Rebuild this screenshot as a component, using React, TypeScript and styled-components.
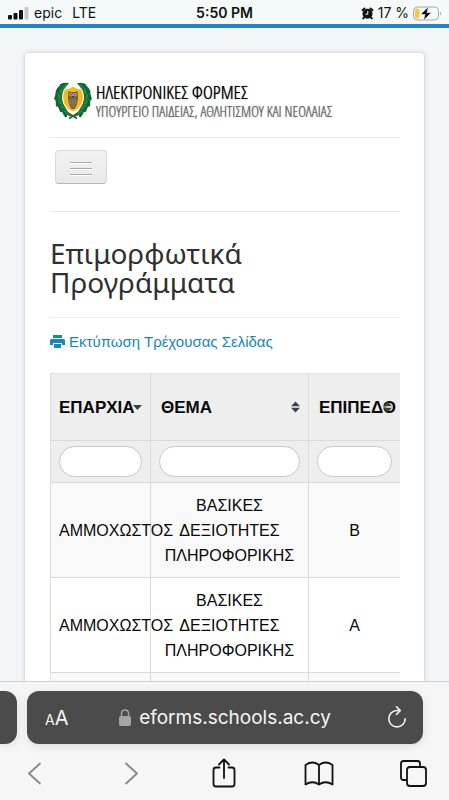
import React from "react";
import styled, { createGlobalStyle } from "styled-components";

const GlobalStyle = createGlobalStyle`
  *, *::before, *::after { box-sizing: border-box; }
  body { margin: 0; background: #f3f5f7; color: #080808; font-family: "Liberation Sans", Arial, sans-serif; }
  button { font: inherit; color: inherit; cursor: pointer; }
`;

const Screen = styled.div`
  height: 100vh;
  display: flex;
  flex-direction: column;
  overflow: hidden;
`;

const StatusBar = styled.header`
  flex: none;
  height: 28px;
  display: grid;
  grid-template-columns: 1fr auto 1fr;
  align-items: center;
  padding: 2px 7px 0;
  background: #f4f9fa;
  border-bottom: 4px solid #2486bf;
  color: #111;
  font: 14px/22px Inter, sans-serif;
`;

const Carrier = styled.div`
  display: flex;
  align-items: center;
  gap: 5px;
`;

const Network = styled.span`
  margin-left: 5px;
`;

const Clock = styled.time`
  font-weight: 600;
`;

const Power = styled(Carrier)`
  justify-content: flex-end;
  gap: 4px;
`;

const Page = styled.main`
  flex: 1;
  min-height: 0;
  overflow: hidden;
  padding: 24px 24px 0;
`;

const Card = styled.div`
  min-height: 100%;
  padding: 24px 24px 0 25px;
  background: #fff;
  border: 1px solid #dcdedf;
  border-radius: 4px;
  box-shadow: 0 0 4px rgba(0, 0, 0, 0.12);
`;

const Brand = styled.a`
  display: flex;
  align-items: center;
  gap: 4px;
  height: 60px;
  padding: 0 0 12px 4px;
  color: inherit;
  text-decoration: none;
`;

const BrandText = styled.span`
  display: grid;
  white-space: nowrap;
  font-family: "Open Sans Condensed Light", "Open Sans Condensed", "Roboto Condensed", sans-serif;
  font-weight: 300;
  text-shadow: 0 0 1px currentColor;
`;

const BrandTitle = styled.span`
  color: #000;
  font-size: 19px;
  line-height: 20px;
`;

const BrandSub = styled.span`
  color: #666;
  font-size: 15px;
  line-height: 18px;
`;

const NavRow = styled.nav`
  height: 75px;
  padding: 12px 5px;
  border-top: 1px solid #e8e8e8;
  border-bottom: 1px solid #e8e8e8;
`;

const MenuButton = styled.button`
  display: grid;
  place-items: center;
  width: 52px;
  height: 34px;
  padding: 2px 0 0;
  border: 1px solid #dadada;
  border-bottom-color: #b8b8b8;
  border-radius: 4px;
  background: linear-gradient(#f3f3f3, #e8e8e8);
`;

const Heading = styled.h1`
  margin: 0;
  padding: 27px 0 20px;
  border-bottom: 1px solid #eee;
  color: #303030;
  font: 400 28px/29px "Noto Sans", sans-serif;
`;

const PrintLink = styled.a`
  display: flex;
  align-items: center;
  gap: 4px;
  padding: 13px 0 20px;
  color: #1487c0;
  font-size: 15px;
  line-height: 22px;
  text-decoration: none;
`;

const Table = styled.table`
  width: 100%;
  table-layout: fixed;
  border-collapse: separate;
  border-spacing: 0;
  border-top: 1px solid #e3e3e3;
  border-left: 1px solid #ddd;
  font-size: 16px;
  line-height: 25px;
`;

const Col = styled.col<{ $w?: number }>`
  width: ${(p) => (p.$w ? `${p.$w}px` : "auto")};
`;

const Cell = styled.td`
  padding: 10px 8px 9px;
  border-bottom: 1px solid #d9d9d9;
  border-right: 1px solid #d9d9d9;
  text-align: center;
  vertical-align: middle;
  white-space: nowrap;
  &:last-child { border-right: 0; }
`;

const HeadCell = styled(Cell).attrs({ as: "th", scope: "col" })`
  position: relative;
  height: 67px;
  background: #eee;
  text-align: left;
  font-size: 17px;
  font-weight: 700;
  & + & { padding-left: 10px; }
`;

const FilterCell = styled(Cell)`
  padding: 5px 8px;
  background: #eee;
`;

const WrapCell = styled(Cell)`
  white-space: normal;
`;

const Row = styled.tr`
  background: #fff;
  &:nth-child(odd) { background: #f9f9f9; }
`;

const SortIcon = styled.svg`
  position: absolute;
  right: 7px;
  top: 50%;
  margin-top: -6px;
`;

const Filter = styled.input`
  display: block;
  width: 100%;
  height: 31px;
  padding: 0 12px;
  border: 1px solid #c8c8c8;
  border-radius: 16px;
  background: #fff;
  font: inherit;
`;

const BrowserBar = styled.footer`
  flex: none;
  padding-top: 9px;
  border-top: 1px solid #cfcfcf;
  background: #f6f6f6;
`;

const TabStrip = styled.div`
  display: flex;
  gap: 10px;
  padding-right: 26px;
`;

const PreviousTab = styled.div`
  width: 17px;
  border-radius: 0 12px 12px 0;
  background: #4b4b4b;
  box-shadow: 0 2px 10px rgba(0, 0, 0, 0.1);
`;

const Address = styled.div`
  flex: 1;
  display: grid;
  grid-template-columns: 1fr auto 1fr;
  align-items: center;
  height: 53px;
  padding: 0 16px;
  border-radius: 12px;
  background: #4b4b4b;
  box-shadow: 0 2px 10px rgba(0, 0, 0, 0.1);
  color: #f5f5f5;
`;

const IconButton = styled.button<{ $end?: boolean }>`
  display: flex;
  align-items: center;
  justify-self: ${(p) => (p.$end ? "end" : "start")};
  padding: 0;
  border: 0;
  background: none;
`;

const TextSize = styled(IconButton)`
  align-items: baseline;
  padding: 2px 0 0 2px;
  font: 20px/24px Inter, sans-serif;
`;

const SmallA = styled.span`
  font-size: 14px;
`;

const Host = styled.span`
  display: flex;
  align-items: center;
  gap: 8px;
  font: 19px/24px Inter, sans-serif;
`;

const Tools = styled.nav`
  display: flex;
  justify-content: space-between;
  align-items: center;
  height: 56px;
  padding: 4px 21px 0;
`;

const sortPaths = {
  desc: "M1 4H10L5.500 9Z",
  both: "M1 5.300L5.500 .5L10 5.300ZM1 6.700H10L5.500 11.500Z",
};

function Sort({ kind }: { kind: "desc" | "both" }) {
  return (
    <SortIcon width="11" height="12" viewBox="0 0 11 12" fill="#3a4144" aria-hidden="true">
      <path d={sortPaths[kind]} />
      {kind === "both" && <path d="M1 6H10" stroke="#c8cccc" strokeWidth="1" />}
    </SortIcon>
  );
}

function Emblem() {
  const leaves = [
    [10, 4, -35], [6, 9, -60], [4, 15, -85], [5, 21, -105], [8, 26, -125], [12, 31, -140],
  ];
  const half = (
    <g>
      <path d="M15 1Q5 0 2 9Q-1 20 6 28Q11 33 18 35Q13 29 10 23Q5 12 15 1Z" fill="#17743a" />
      {leaves.map(([x, y, r]) => (
        <g key={y} transform={`translate(${x} ${y}) rotate(${r})`}>
          <ellipse rx="4" ry="1.600" cy="-1.500" transform="rotate(24)" fill="#136532" />
          <ellipse rx="3" ry=".8" cy="1" transform="rotate(-24)" fill="#2f8c4a" />
        </g>
      ))}
    </g>
  );
  return (
    <svg width="38" height="38" viewBox="0 0 38 38" aria-hidden="true">
      {half}
      <g transform="translate(38 0) scale(-1 1)">{half}</g>
      <path d="M14 31L23 36.500M24 31L15 36.500" stroke="#28683a" strokeWidth="2" />
      <path d="M10.500 7Q16 7 19 4Q22 7 27.500 7Q31 15 28 22Q25 28 19 30Q13 28 10 22Q7 15 10.500 7Z" fill="#f3bd22" stroke="#fffbe6" />
      <path d="M14.500 9L17 10H21L23.500 9L24 15Q24 22 20.500 27H17.500Q14 22 14 15Z" fill="#715a40" />
      <path d="M16 17V22M18 16V25M20 16V25M22 17V22" stroke="#b29c73" strokeWidth=".7" />
      <circle cx="17" cy="12.700" r="1.800" fill="#c9c0a3" />
      <circle cx="21" cy="12.700" r="1.800" fill="#c9c0a3" />
      <circle cx="17" cy="12.700" r=".8" fill="#282014" />
      <circle cx="21" cy="12.700" r=".8" fill="#282014" />
      <path d="M18.200 14H19.800L19 16Z" fill="#2e2519" />
    </svg>
  );
}

const filters = ["Επαρχία", "Θέμα", "Επίπεδο"];

const rows = [
  { district: "ΑΜΜΟΧΩΣΤΟΣ", subject: "ΒΑΣΙΚΕΣ ΔΕΞΙΟΤΗΤΕΣ ΠΛΗΡΟΦΟΡΙΚΗΣ", level: "Β" },
  { district: "ΑΜΜΟΧΩΣΤΟΣ", subject: "ΒΑΣΙΚΕΣ ΔΕΞΙΟΤΗΤΕΣ ΠΛΗΡΟΦΟΡΙΚΗΣ", level: "Α" },
];

export default function App() {
  return (
    <Screen>
      <GlobalStyle />
      <StatusBar>
        <Carrier>
          <svg width="22" height="13" viewBox="0 0 22 13" aria-hidden="true">
            <rect x="1" y="8" width="4" height="4.500" rx="1" fill="#111" />
            <rect x="6.500" y="6" width="4" height="6.500" rx="1" fill="#111" />
            <rect x="12" y="3" width="4" height="9.500" rx="1" fill="#111" />
            <rect x="17.500" y="0" width="4" height="12.500" rx="1" fill="#c4c8c9" />
          </svg>
          <span>epic</span>
          <Network>LTE</Network>
        </Carrier>
        <Clock>5:50 PM</Clock>
        <Power>
          <svg width="13" height="13" viewBox="0 0 13 13" aria-hidden="true">
            <circle cx="6.500" cy="6.800" r="5" fill="#111" />
            <path d="M1.500 3.200L3.500 1.500M11.500 3.200L9.500 1.500M3 10.500L2.200 11.500M10 10.500L10.800 11.500" stroke="#111" strokeWidth="2" strokeLinecap="round" />
            <path d="M6.800 4V7.200H4.500" fill="none" stroke="#fff" />
          </svg>
          <span>17 %</span>
          <svg width="29" height="15" viewBox="0 0 29 15" aria-hidden="true">
            <rect x=".5" y="1" width="25" height="13" rx="4" fill="none" stroke="#a4a7a8" />
            <rect x="2" y="2.500" width="4.500" height="10" rx="2" fill="#f2cb35" />
            <path d="M27 5.500Q29 7.500 27 9.500Z" fill="#a4a7a8" />
            <path d="M15.500 .5L7.500 8.500H12L10.500 14.500L18.500 6.500H14Z" fill="#111" stroke="#f4f9fa" strokeWidth=".6" />
          </svg>
        </Power>
      </StatusBar>

      <Page>
        <Card>
          <Brand href="#">
            <Emblem />
            <BrandText>
              <BrandTitle>ΗΛΕΚΤΡΟΝΙΚΕΣ ΦΟΡΜΕΣ</BrandTitle>
              <BrandSub>ΥΠΟΥΡΓΕΙΟ ΠΑΙΔΕΙΑΣ, ΑΘΛΗΤΙΣΜΟΥ ΚΑΙ ΝΕΟΛΑΙΑΣ</BrandSub>
            </BrandText>
          </Brand>
          <NavRow>
            <MenuButton type="button" aria-label="Μενού">
              <svg width="22" height="15" viewBox="0 0 22 15" aria-hidden="true">
                <path d="M0 2.500H22M0 8.500H22M0 14.500H22" stroke="#fff" />
                <path d="M0 1.500H22M0 7.500H22M0 13.500H22" stroke="#aaa" />
              </svg>
            </MenuButton>
          </NavRow>
          <Heading>
            Επιμορφωτικά
            <br />
            Προγράμματα
          </Heading>
          <PrintLink href="#">
            <svg width="15" height="14" viewBox="0 0 15 14" fill="#1487c0" aria-hidden="true">
              <path d="M3 0H12V3H3ZM1.500 4H13.500Q15 4 15 5.500V10H12V8H3V10H0V5.500Q0 4 1.500 4ZM4 9H11V13H4Z" />
            </svg>
            Εκτύπωση Τρέχουσας Σελίδας
          </PrintLink>
          <Table>
            <colgroup>
              <Col $w={100} />
              <Col $w={158} />
              <Col />
            </colgroup>
            <thead>
              <tr>
                <HeadCell>ΕΠΑΡΧΙΑ<Sort kind="desc" /></HeadCell>
                <HeadCell>ΘΕΜΑ<Sort kind="both" /></HeadCell>
                <HeadCell>ΕΠΙΠΕΔΟ<Sort kind="both" /></HeadCell>
              </tr>
              <tr>
                {filters.map((name) => (
                  <FilterCell key={name}>
                    <Filter type="text" aria-label={name} />
                  </FilterCell>
                ))}
              </tr>
            </thead>
            <tbody>
              {rows.map((r) => (
                <Row key={r.level}>
                  <Cell>{r.district}</Cell>
                  <WrapCell>{r.subject}</WrapCell>
                  <Cell>{r.level}</Cell>
                </Row>
              ))}
              <Row>
                <Cell />
                <Cell />
                <Cell />
              </Row>
            </tbody>
          </Table>
        </Card>
      </Page>

      <BrowserBar>
        <TabStrip>
          <PreviousTab />
          <Address>
            <TextSize type="button">
              <SmallA>A</SmallA>A
            </TextSize>
            <Host>
              <svg width="12" height="17" viewBox="0 0 12 17" aria-hidden="true">
                <rect x="0" y="7" width="12" height="10" rx="2" fill="#a5a5a5" />
                <path d="M2.500 7V4.500Q2.500 1 6 1Q9.500 1 9.500 4.500V7" fill="none" stroke="#a5a5a5" strokeWidth="1.500" />
              </svg>
              eforms.schools.ac.cy
            </Host>
            <IconButton type="button" $end aria-label="Reload">
              <svg width="20" height="24" viewBox="0 0 20 24" fill="none" stroke="#f5f5f5" strokeWidth="1.600" strokeLinecap="round" strokeLinejoin="round">
                <path d="M12.500 4.500H10A8.200 8.200 0 1 0 18.200 12.700M9.500 .8L13.300 4.500L9.500 8.500" />
              </svg>
            </IconButton>
          </Address>
        </TabStrip>
        <Tools>
          <IconButton type="button" aria-label="Back">
            <svg width="28" height="28" viewBox="0 0 28 28" fill="none" stroke="#858585" strokeWidth="1.700" strokeLinecap="round" strokeLinejoin="round">
              <path d="M19 3.500L8 13.500L19 23.500" />
            </svg>
          </IconButton>
          <IconButton type="button" aria-label="Forward">
            <svg width="28" height="28" viewBox="0 0 28 28" fill="none" stroke="#858585" strokeWidth="1.700" strokeLinecap="round" strokeLinejoin="round">
              <path d="M11 3.500L22 13.500L11 23.500" />
            </svg>
          </IconButton>
          <IconButton type="button" aria-label="Share">
            <svg width="28" height="32" viewBox="0 0 28 32" fill="none" stroke="#111" strokeWidth="1.800" strokeLinecap="round" strokeLinejoin="round">
              <path d="M9.500 9.500H6Q3.500 9.500 3.500 12V26Q3.500 28.500 6 28.500H22Q24.500 28.500 24.500 26V12Q24.500 9.500 22 9.500H18.500M14 20V1.500M9 6.500L14 1.500L19 6.500" />
            </svg>
          </IconButton>
          <IconButton type="button" aria-label="Bookmarks">
            <svg width="30" height="28" viewBox="0 0 30 28" fill="none" stroke="#111" strokeWidth="1.800" strokeLinejoin="round">
              <path d="M15 24.500Q8.500 20 1.500 24.500V5Q8.500 0 15 5ZM15 24.500Q21.500 20 28.500 24.500V5Q21.500 0 15 5Z" />
            </svg>
          </IconButton>
          <IconButton type="button" aria-label="Tabs">
            <svg width="28" height="28" viewBox="0 0 28 28" fill="none" stroke="#111" strokeWidth="1.800" strokeLinejoin="round">
              <rect x="7" y="7" width="19" height="19" rx="3" />
              <path d="M7 20H3.500Q1 20 1 17.500V3.500Q1 1 3.500 1H17.500Q20 1 20 3.500V7" />
            </svg>
          </IconButton>
        </Tools>
      </BrowserBar>
    </Screen>
  );
}
